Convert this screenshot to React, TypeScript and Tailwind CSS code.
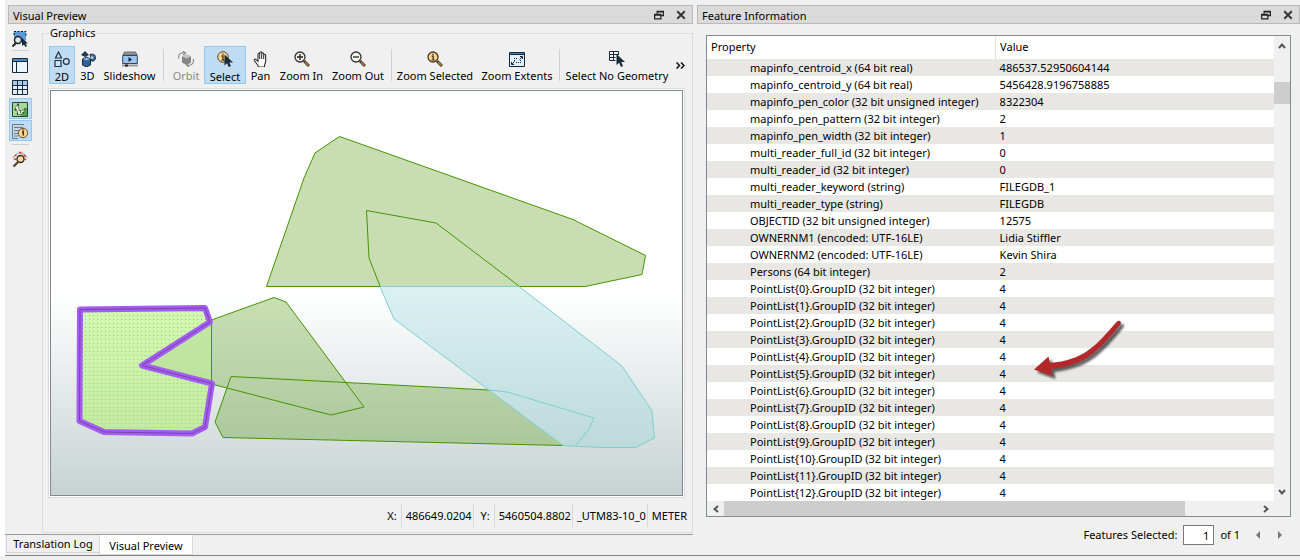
import type { ReactNode } from "react";

const ROWS: [string, string][] = [
  ["mapinfo_centroid_x (64 bit real)", "486537.52950604144"],
  ["mapinfo_centroid_y (64 bit real)", "5456428.9196758885"],
  ["mapinfo_pen_color (32 bit unsigned integer)", "8322304"],
  ["mapinfo_pen_pattern (32 bit integer)", "2"],
  ["mapinfo_pen_width (32 bit integer)", "1"],
  ["multi_reader_full_id (32 bit integer)", "0"],
  ["multi_reader_id (32 bit integer)", "0"],
  ["multi_reader_keyword (string)", "FILEGDB_1"],
  ["multi_reader_type (string)", "FILEGDB"],
  ["OBJECTID (32 bit unsigned integer)", "12575"],
  ["OWNERNM1 (encoded: UTF-16LE)", "Lidia Stiffler"],
  ["OWNERNM2 (encoded: UTF-16LE)", "Kevin Shira"],
  ["Persons (64 bit integer)", "2"],
  ...Array.from({ length: 13 }, (_, i): [string, string] => [
    `PointList{${i}}.GroupID (32 bit integer)`,
    "4",
  ]),
];

function Icon({ children, className = "h-4 w-4" }: { children: ReactNode; className?: string }) {
  return (
    <svg viewBox="0 0 16 16" fill="none" className={`shrink-0 ${className}`} aria-hidden="true">
      {children}
    </svg>
  );
}

const Lens = () => (
  <>
    <path d="M10 10l5 5" stroke="#4a3a28" strokeWidth="3" />
    <path d="M11 11l3.5 3.5" stroke="#b0813f" strokeWidth="1.4" />
  </>
);

const Cursor = () => <path d="M7.500 3.500v11l2.600-2.200 1.700 3.700 2.200-1-1.700-3.600H16z" fill="#1a2a38" />;

const icons = {
  twoD: (
    <Icon>
      <path d="M4.500 1L7.500 7H1.500zM1 9.500h6v6H1z" stroke="#1d2f45" strokeWidth="1.200" fill="#cfe2f5" />
      <circle cx="12.300" cy="10.500" r="2.900" stroke="#1d2f45" strokeWidth="1.200" fill="#cfe2f5" />
    </Icon>
  ),
  threeD: (
    <Icon>
      <path d="M5 0l4 4-4 2-4-2z" fill="#1d3a57" />
      <path d="M2.500 8l4-2 4 2v6l-4 2-4-2z" fill="#2f6290" stroke="#17293b" />
      <path d="M3 8l3.500 1.500L10 8 6.500 6.500z" fill="#84b7e2" />
      <path d="M10 3.500c3-1 5.500 0 5.500 3s-2 4-4 3.500z" fill="#41698c" stroke="#1d2f45" />
      <circle cx="12" cy="6.500" r="1.500" fill="#a9c7e0" />
    </Icon>
  ),
  slides: (
    <Icon>
      <path d="M2.500 1h11L15 4H1z" fill="#9a9a9a" stroke="#555" strokeWidth=".8" />
      <path d="M.700 4.500h14.600v8H.700z" fill="#9cc4f0" stroke="#32475c" />
      <path d="M6.500 6v5l3.500-2.500z" fill="#14202c" />
      <path d="M0 14.500h16" stroke="#999" strokeWidth="2" />
      <path d="M3 14.500h3" stroke="#222" strokeWidth="2" />
    </Icon>
  ),
  orbit: (
    <Icon>
      <path d="M4 5.500L8.500 3.500 13 5.500v6L8.500 14 4 11.500z" fill="#858585" />
      <path d="M4 5.500l4.500 2 4.500-2-4.500-2z" fill="#c4c4c4" />
      <path
        d="M1 7.500C-.5 3.500 3 1 7 2M5 0l2.500 2L5 4M15 8c2 4-2 7-6 6M11 12l-2.500 2 2.500 2"
        stroke="#8d8d8d"
        strokeWidth="1.200"
      />
    </Icon>
  ),
  select: (
    <Icon>
      <circle cx="6" cy="6" r="5.300" fill="#f8d591" stroke="#654b28" />
      <path d="M4.500 5H6v4M4.500 9.200h3M6 2.500v1.300" stroke="#4b3418" strokeWidth="1.300" />
      <Cursor />
    </Icon>
  ),
  pan: (
    <Icon>
      <path
        d="M5 14.500L1.500 9.800c-.900-1.300.700-2.100 1.600-1.200L5 10.300V3.500c0-1.400 1.700-1.400 1.700 0V1.900c0-1.500 2-1.500 2 0v1c0-1.500 2-1.400 2 0v1.300c0-1.400 2-1.200 2 .2V10c0 2-1 2.700-1.200 4.500V16H5.200z"
        fill="#fff"
        stroke="#2b2b2b"
        strokeWidth="1.100"
      />
      <path d="M6.700 3.500V8M8.700 2.500V8M10.700 4v4" stroke="#2b2b2b" />
    </Icon>
  ),
  zoomIn: (
    <Icon>
      <Lens />
      <circle cx="6" cy="6" r="5" fill="#f5f0e6" stroke="#333" strokeWidth="1.300" />
      <path d="M3 6h6M6 3v6" stroke="#222" strokeWidth="1.300" />
    </Icon>
  ),
  zoomOut: (
    <Icon>
      <Lens />
      <circle cx="6" cy="6" r="5" fill="#f5f5f0" stroke="#333" strokeWidth="1.300" />
      <path d="M3 6h6" stroke="#222" strokeWidth="1.300" />
    </Icon>
  ),
  zoomSel: (
    <Icon>
      <Lens />
      <circle cx="6" cy="6" r="5" fill="#fbd48a" stroke="#4b3a25" strokeWidth="1.300" />
      <path d="M4.800 5.200h1.400V9M4.500 9h3.200M6 2.800v1.300" stroke="#3b2a14" strokeWidth="1.200" />
    </Icon>
  ),
  extents: (
    <Icon>
      <path d="M.500 1.500h15v14H.500z" fill="#e3f0fb" stroke="#10263c" />
      <path d="M1 2.500h14" stroke="#4a83bd" />
      <path d="M1 3.500h14" stroke="#10263c" />
      <path d="M11 5.500h2.500V8M2.500 11v2.500H5" stroke="#10263c" />
      <path d="M13 6l-2.500 2.500M3 13l2.500-2.500" stroke="#10263c" />
      <path d="M5 7.500h4M5 9.500h1M7 11.500h4M11.500 9v3" stroke="#10263c" strokeDasharray="1 1" />
    </Icon>
  ),
  noGeom: (
    <Icon>
      <path d="M9.500 4V.500H.500v9h6M.500 3.500h9M.500 6.500h6M4.500 .500v9" stroke="#1a2a38" />
      <path d="M7.500 3v11l2.700-2.300L12 16l2-1-1.800-4H16z" fill="#1a2a38" />
    </Icon>
  ),
};

function Tool({
  icon,
  label,
  width,
  active,
  disabled,
}: {
  icon: ReactNode;
  label: string;
  width: string;
  active?: boolean;
  disabled?: boolean;
}) {
  return (
    <button
      type="button"
      disabled={disabled}
      className={`flex h-[38px] shrink-0 flex-col items-center border pt-1 whitespace-nowrap ${width} ${
        active ? "gap-[2px] border-[#90c8f6] bg-[#c0dcf3]" : "gap-px border-transparent"
      } ${disabled ? "text-[#8a8a8a]" : "text-black"}`}
    >
      {icon}
      <span className="leading-4">{label}</span>
    </button>
  );
}

const ToolSep = ({ className }: { className: string }) => (
  <span className={`h-8 w-px shrink-0 bg-[#cfcfcf] ${className}`} />
);

function TitleBar({ title }: { title: string }) {
  return (
    <header className="flex h-[19px] items-center border border-[#b9b9b9] bg-[#dadada] pr-[6px] pl-1">
      <h2 className="flex-1 pt-[2px] leading-4">{title}</h2>
      <button type="button" aria-label="Float panel" className="mr-3">
        <Icon className="h-[10px] w-[10px]">
          <path d="M5 6V2h10v7h-4M5 3h10" stroke="#222" strokeWidth="2" />
          <path d="M1 7h10v7H1zM1 8h10" stroke="#222" strokeWidth="2" />
        </Icon>
      </button>
      <button type="button" aria-label="Close panel">
        <Icon className="h-[10px] w-[10px]">
          <path d="M2 2l12 12M14 2L2 14" stroke="#333" strokeWidth="3" />
        </Icon>
      </button>
    </header>
  );
}

function SideBar() {
  const base = "flex h-[21px] w-[23px] items-center justify-start border pl-[2px]";
  const on = "border-[#90c8f6] bg-[#c0dcf3]";
  const off = "border-transparent";
  return (
    <nav className="ml-px flex w-[23px] flex-col items-center pt-[2px]">
      <button type="button" aria-label="Inspect selection" className={`${base} ${off}`}>
        <Icon>
          <path d="M2 .500h12v9H2z" fill="#5b9ad9" />
          <path d="M2 4V.500h12V6" stroke="#111" strokeDasharray="2 1.500" />
          <circle cx="6" cy="9" r="3.500" fill="#d7e6ee" stroke="#222" strokeWidth="1.500" />
          <path d="M4 12l-3.500 3.500" stroke="#222" strokeWidth="2" />
          <path d="M10 7v8l2-1.500 1.500 2.500 1.500-1-1.500-2.500H16z" fill="#1a2a38" />
        </Icon>
      </button>
      <span className="mt-px mb-1 h-px w-[17px] bg-[#cfcfcf]" />
      <button type="button" aria-label="Display control" className={`${base} ${off}`}>
        <Icon>
          <path d="M.500.500h15v14H.500z" fill="#edf4fa" stroke="#15293b" />
          <path d="M1 2h14" stroke="#4a86c5" strokeWidth="2" />
          <path d="M1 3.500h14M4.500 4v10" stroke="#15293b" />
        </Icon>
      </button>
      <button type="button" aria-label="Table view" className={`mb-px ${base} ${off}`}>
        <Icon>
          <path d="M.500 1.500h15v14H.500z" fill="#e4edf5" />
          <path d="M1 2h14v4H1z" fill="#a9cdf0" />
          <path d="M.500 1.500h15v14H.500zM.500 6.500h15M.500 10.500h15M5.500 1v14M10.500 1v14" stroke="#15293b" />
        </Icon>
      </button>
      <button type="button" aria-label="Graphics view" aria-pressed="true" className={`mb-px ${base} ${on}`}>
        <Icon>
          <path d="M.500 1.500h15v14H.500z" fill="#a5d99a" stroke="#26462b" />
          <path d="M8 15h7V6z" fill="#4fa653" />
          <path d="M6 3L4 5.500 2.500 9l3 1v3.500h2.500l3.500-1 1-4.500-2.500 1.500H7z" fill="#f2f0dc" stroke="#435f3a" strokeWidth=".7" />
          <path d="M6 2.500V5M3 8.500h1.500M13 7v1.500M5.500 12v1.500M11 11v1.500M8 11h1" stroke="#213a2a" strokeWidth="1.300" />
        </Icon>
      </button>
      <button type="button" aria-label="Feature information" aria-pressed="true" className={`${base} ${on}`}>
        <Icon>
          <path d="M.500 1h12v14H.500z" fill="#c4d6e4" />
          <path d="M12 1.500H.500v14H6M2 4.500h9M2 7.500h5M2 10.500h4M2 13h4" stroke="#667c90" />
          <circle cx="11" cy="10" r="4.700" fill="#f8d591" stroke="#6b5230" />
          <path d="M10 9h1.300v3.500M11 6.500v1.300" stroke="#3c2b18" strokeWidth="1.500" />
        </Icon>
      </button>
      <span className="mt-[3px] mb-[3px] h-px w-[17px] bg-[#cfcfcf]" />
      <button type="button" aria-label="Locate feature" className={`${base} ${off}`}>
        <Icon>
          <path d="M1 7c3-6 10-7 14 0" stroke="#b5b5b5" strokeWidth="1.500" />
          <path d="M3 5l1.500-1M7 1.500h2.500M12 4l1.500 1.500M4 8l-2 .5M13 8l1 1" stroke="#e0352b" strokeWidth="1.500" />
          <circle cx="8.500" cy="8" r="3.500" fill="#fbd9a0" stroke="#3a2c20" strokeWidth="1.400" />
          <path d="M6 11l-4.500 4.500" stroke="#5a3d20" strokeWidth="2.200" />
        </Icon>
      </button>
    </nav>
  );
}

function MapView() {
  return (
    <svg
      viewBox="51 91 631 404"
      preserveAspectRatio="none"
      className="block w-full"
      role="img"
      aria-label="Feature polygons"
      fill="none"
    >
      <defs>
        <linearGradient id="sky" x1="0" y1="0" x2="0" y2="1">
          <stop offset="0" stopColor="#fff" />
          <stop offset=".5" stopColor="#fff" />
          <stop offset="1" stopColor="#c7d2d2" />
        </linearGradient>
        <pattern id="dots" width="4" height="4" patternUnits="userSpaceOnUse">
          <path d="M1 3h1v1H1z" fill="#a9bf9c" />
        </pattern>
      </defs>
      <path d="M51 91h631v404H51z" fill="url(#sky)" />
      <path d="M339.500 136.500L573 219.500 645.500 255.500 642 274.500 585 286.500H266.500L304 178 315 153z" fill="#c8deb2" stroke="#459400" />
      <path d="M380 286L369 258 366.500 210.500 436 223 519 286" stroke="#459400" />
      <path
        d="M211.500 320L274 297.500 286 302 364 407 331 415 211.500 384zM231 376.500L489 390 563 445.500 223 437.500 215 422z"
        fill="#479400"
        fillOpacity=".29"
      />
      <path d="M489 390L231 376.500 215 422 223 437.500 563 445.500" stroke="#459400" />
      <path
        d="M380 286.500H519L622 366 652 411 654.500 438 636 447.500 600 447.500 563 445.500 394 319z"
        fill="#8cd3d6"
        fillOpacity=".32"
        stroke="#7ecfd0"
      />
      <path d="M489 390l18 2 87 26-5 11-13 16" stroke="#7ecfd0" />
      <path d="M80 309L205 308 211.500 322V384L205 427 192 433.500 104 432 80 421z" fill="#aaf75f" fillOpacity=".5" />
      <path d="M143 365L211.500 322V384z" fill="#9bb988" fillOpacity=".25" />
      <path d="M80 309L205 308 211 322 141 365.500 212 384 205 427 192 433.500 104 432 80 421z" fill="url(#dots)" />
      <path d="M211.500 320L274 297.500 286 302 364 407 331 415 211.500 384z" stroke="#459400" />
      <path
        d="M80 309.500L205 308 210 322 142 365.500 212 383.500 205 427 192 433.500 104 432 79.500 421z"
        stroke="#a45cf4"
        strokeWidth="6"
        strokeLinejoin="round"
      />
      <path
        d="M80 309.500L205 308 210 322 142 365.500 212 383.500 205 427 192 433.500 104 432 79.500 421z"
        stroke="#7447a4"
      />
    </svg>
  );
}

function GraphicsPanel() {
  return (
    <fieldset className="ml-[10px] flex min-w-0 flex-1 flex-col border border-[#dcdcdc] pl-[5px]">
      <legend className="ml-px px-px leading-[14px]">Graphics</legend>
      <div className="mt-[6px] flex items-center overflow-hidden pl-px">
        <Tool icon={icons.twoD} label="2D" width="w-[26px]" active />
        <Tool icon={icons.threeD} label="3D" width="w-[25px]" />
        <Tool icon={icons.slides} label="Slideshow" width="w-[59px]" />
        <ToolSep className="mr-1 ml-1" />
        <Tool icon={icons.orbit} label="Orbit" width="w-[36px]" disabled />
        <Tool icon={icons.select} label="Select" width="w-[42px]" active />
        <Tool icon={icons.pan} label="Pan" width="w-[29px]" />
        <Tool icon={icons.zoomIn} label="Zoom In" width="w-[53px]" />
        <Tool icon={icons.zoomOut} label="Zoom Out" width="w-[60px]" />
        <ToolSep className="mr-[2px] ml-[3px]" />
        <Tool icon={icons.zoomSel} label="Zoom Selected" width="w-[82px]" />
        <Tool icon={icons.extents} label="Zoom Extents" width="w-[82px]" />
        <ToolSep className="mr-[2px] ml-px" />
        <Tool icon={icons.noGeom} label="Select No Geometry" width="w-[110px]" />
        <button type="button" aria-label="More tools" className="ml-1">
          <svg viewBox="0 0 9 7" className="h-[7px] w-[9px]" fill="none" stroke="#111" strokeWidth="1.500">
            <path d="M.500.500l3 3-3 3M5 .500l3 3-3 3" />
          </svg>
        </button>
      </div>
      <div className="mt-1 mr-[7px] flex flex-1 border border-[#dcdcdc] bg-white p-px">
        <div className="flex flex-1 border border-[#828790]">
          <MapView />
        </div>
      </div>
      <div className="mt-[6px] mr-1 mb-[5px] flex h-[23px] items-stretch justify-end leading-[24px]">
        <span className="pr-1">X:</span>
        <span className="border-l border-[#d7d7d7] pr-px pl-1">486649.0204</span>
        <span className="border-l border-[#d7d7d7] pr-1 pl-[7px]">Y:</span>
        <span className="border-l border-[#d7d7d7] pr-px pl-1">5460504.8802</span>
        <span className="border-l border-[#d7d7d7] pr-px pl-1">_UTM83-10_0</span>
        <span className="border-l border-[#d7d7d7] pr-px pl-1">METER</span>
      </div>
    </fieldset>
  );
}

function Chevron({ d, label }: { d: string; label: string }) {
  return (
    <button type="button" aria-label={label} className="flex h-[15px] w-[17px] shrink-0 items-center justify-center">
      <svg viewBox="0 0 8 8" className="h-2 w-2" fill="none" stroke="#555" strokeWidth="2">
        <path d={d} />
      </svg>
    </button>
  );
}

function FeatureTable() {
  return (
    <div className="relative mx-[9px] mt-[11px] border border-[#828790] bg-white">
      <div className="flex">
        <div className="min-w-0 flex-1">
          <table className="w-full table-fixed border-collapse text-left">
            <colgroup>
              <col className="w-[50.9%]" />
              <col />
            </colgroup>
            <thead>
              <tr className="h-[23px]">
                <th className="border-r border-[#e2e2e2] p-0 pl-1 font-normal">Property</th>
                <th className="p-0 pl-1 font-normal">Value</th>
              </tr>
            </thead>
            <tbody>
              {ROWS.map(([name, value]) => (
                <tr key={name} className="h-[17px] leading-[17px] odd:bg-[#e8e7e3]">
                  <td className="truncate p-0 pl-[43px]">{name}</td>
                  <td className="truncate p-0 pl-1">{value}</td>
                </tr>
              ))}
            </tbody>
          </table>
        </div>
        <div className="flex w-4 flex-col items-center bg-[#f0f0f0] py-[2px]">
          <Chevron d="M1 6l3-3.500L7 6" label="Scroll up" />
          <span className="mt-[29px] h-[22px] w-full bg-[#cdcdcd]" />
          <span className="flex-1" />
          <Chevron d="M1 2l3 3.500L7 2" label="Scroll down" />
        </div>
      </div>
      <div className="flex h-[15px] bg-[#f0f0f0] pr-4">
        <Chevron d="M6 1L2.500 4 6 7" label="Scroll left" />
        <div className="flex flex-1">
          <span className="w-[86.5%] bg-[#cdcdcd]" />
        </div>
        <Chevron d="M2 1l3.500 3L2 7" label="Scroll right" />
      </div>
      <svg
        viewBox="1030 315 100 70"
        className="absolute top-[279px] right-[160px] h-[70px] w-[100px]"
        style={{ filter: "drop-shadow(3px 3px 1px rgba(0,0,0,.6))" }}
        aria-hidden="true"
      >
        <path
          d="M1034 369.500L1048.500 356.500 1050 363C1083 360 1095 347 1116.500 322 1119.500 319 1122 322 1120.500 324.500 1097 353 1085 365 1051.500 369L1052.500 376z"
          fill="#b3282b"
        />
      </svg>
    </div>
  );
}

export default function App() {
  return (
    <div className="flex min-h-screen flex-col bg-[#f0f0f0] font-['Noto_Sans',sans-serif] text-[11px] text-black">
      <div className="flex flex-1 border-l-[5px] border-white">
        <main className="grid flex-1 grid-cols-[688fr_603fr] gap-1 border-b border-[#828282] pt-[5px]">
          <section className="flex min-w-0 flex-col">
            <div className="flex flex-1 flex-col pl-[3px]">
              <TitleBar title="Visual Preview" />
              <div className="flex flex-1 pt-[2px]">
                <SideBar />
                <GraphicsPanel />
              </div>
            </div>
            <div role="tablist" className="mt-px flex h-[21px] items-start border-t border-[#9c9c9c] pl-px">
              <button
                type="button"
                role="tab"
                aria-selected="false"
                className="h-[18px] w-[93px] border border-t-0 border-r-0 border-[#d5d5d5] pt-px leading-4"
              >
                Translation Log
              </button>
              <button
                type="button"
                role="tab"
                aria-selected="true"
                className="h-5 w-[94px] border border-t-0 border-[#d9d9d9] bg-white pt-[2px] leading-4"
              >
                Visual Preview
              </button>
            </div>
          </section>
          <section className="flex min-w-0 flex-col">
            <TitleBar title="Feature Information" />
            <FeatureTable />
            <div className="mt-2 mr-[9px] flex items-center justify-end">
              <label htmlFor="feature-index" className="mr-[6px]">
                Features Selected:
              </label>
              <input
                id="feature-index"
                defaultValue="1"
                className="h-5 w-[31px] border border-[#7a7a7a] bg-white pr-1 text-right"
              />
              <span className="ml-[6px]">of 1</span>
              <button type="button" aria-label="Previous feature" className="ml-4">
                <svg viewBox="0 0 4 8" className="h-2 w-1">
                  <path d="M4 0v8L0 4z" fill="#777" />
                </svg>
              </button>
              <button type="button" aria-label="Next feature" className="mr-[9px] ml-[18px]">
                <svg viewBox="0 0 4 8" className="h-2 w-1">
                  <path d="M0 0v8l4-4z" fill="#777" />
                </svg>
              </button>
            </div>
          </section>
        </main>
      </div>
      <div className="h-1" />
    </div>
  );
}
